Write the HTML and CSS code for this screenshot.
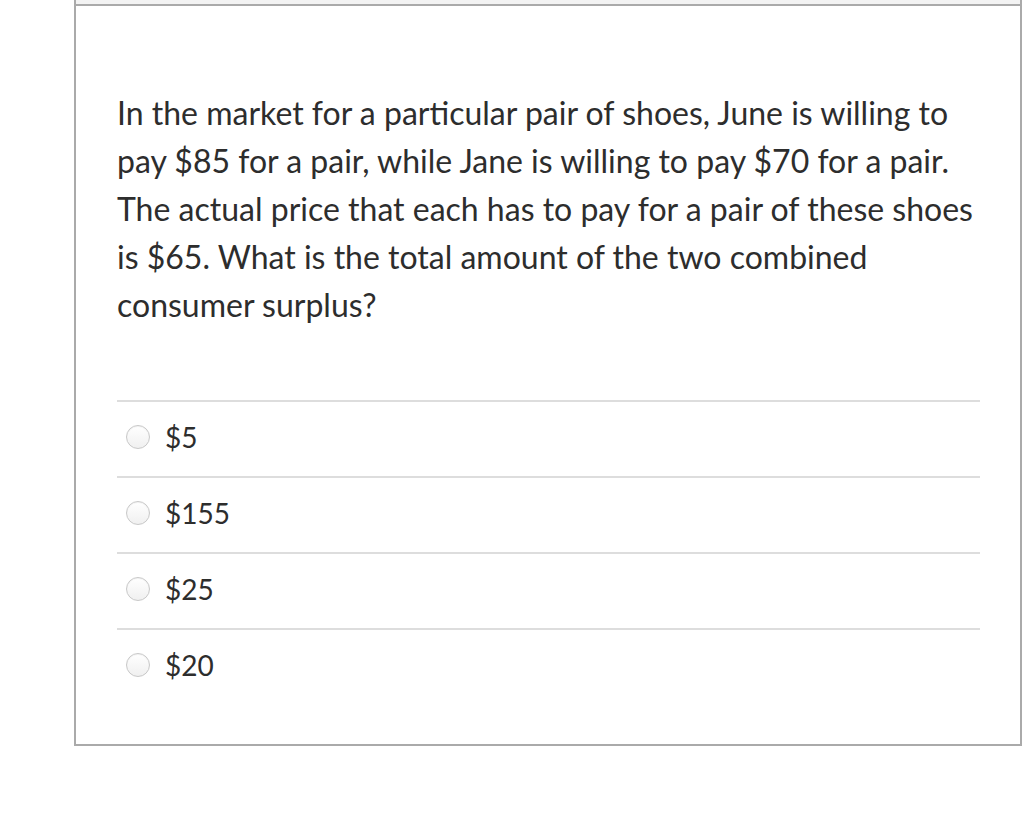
FILE: index.html
```html
<!DOCTYPE html>
<html>
<head>
<meta charset="utf-8">
<link rel="stylesheet" href="styles.css">
</head>
<body>
<div class="card">
  <div class="card-header"></div>
  <div class="card-body">
    <p class="question">In the market for a particular pair of shoes, June is willing to pay $85 for a pair, while Jane is willing to pay $70 for a pair. The actual price that each has to pay for a pair of these shoes is $65. What is the total amount of the two combined consumer surplus?</p>
    <div class="answers">
      <label class="answer"><span class="radio"></span><span class="label">$5</span></label>
      <label class="answer"><span class="radio"></span><span class="label">$155</span></label>
      <label class="answer"><span class="radio"></span><span class="label">$25</span></label>
      <label class="answer"><span class="radio"></span><span class="label">$20</span></label>
    </div>
  </div>
</div>
</body>
</html>
```
FILE: styles.css
```css
html, body {
  margin: 0;
  padding: 0;
  background: #fff;
}
body {
  font-family: Lato, "Noto Sans", sans-serif;
  color: #2d3b45;
}
.card {
  margin-left: 74px;
  width: 948px;
  box-sizing: border-box;
  border: 2px solid #aaaaaa;
  border-top: none;
}
.card-header {
  height: 4px;
  background: #f3f3f3;
  border-bottom: 2px solid #aaaaaa;
}
.card-body {
  padding: 83px 40px 40px 41px;
}
.question {
  margin: 0;
  font-size: 32px;
  line-height: 48px;
  color: #2d2d2d;
}
.answers {
  margin-top: 71px;
  border-top: 2px solid #dddddd;
}
.answer {
  display: flex;
  align-items: center;
  box-sizing: border-box;
  height: 76px;
  padding: 0 0 4px 9px;
  border-bottom: 2px solid #dddddd;
  font-size: 28px;
  color: #2d2d2d;
}
.answer:last-child {
  border-bottom: none;
  height: 74px;
}
.radio {
  width: 22px;
  height: 22px;
  border-radius: 50%;
  border: 1px solid #c8c8c8;
  background: linear-gradient(#ffffff, #f0f0f0);
  box-shadow: inset 0 1px 1px rgba(0,0,0,0.05);
  margin-right: 15px;
  flex: none;
}
```
